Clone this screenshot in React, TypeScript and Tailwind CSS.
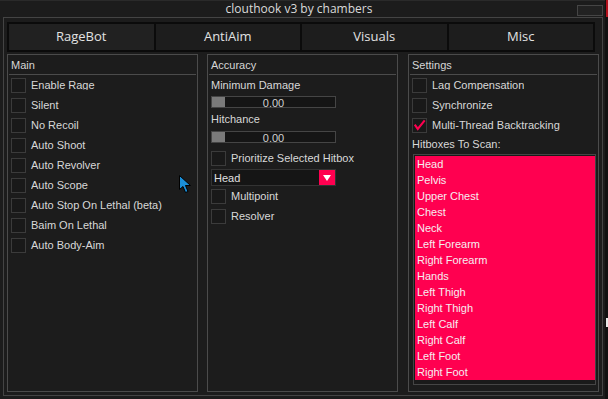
import { ReactNode } from "react";

const mainItems = [
  { label: "Enable Rage", clip: true },
  { label: "Silent" },
  { label: "No Recoil" },
  { label: "Auto Shoot" },
  { label: "Auto Revolver" },
  { label: "Auto Scope", clip: true },
  { label: "Auto Stop On Lethal (beta)" },
  { label: "Baim On Lethal" },
  { label: "Auto Body-Aim" },
];

const hitboxes = [
  "Head",
  "Pelvis",
  "Upper Chest",
  "Chest",
  "Neck",
  "Left Forearm",
  "Right Forearm",
  "Hands",
  "Left Thigh",
  "Right Thigh",
  "Left Calf",
  "Right Calf",
  "Left Foot",
  "Right Foot",
];

const tabs = ["RageBot", "AntiAim", "Visuals", "Misc"];

const Checkbox = ({ label, checked, clip }: { label: string; checked?: boolean; clip?: boolean }) => (
  <div className="flex h-[15px] items-start gap-[5px]">
    <div className="w-[15px] h-[15px] shrink-0 border border-[#3b3b3b] bg-[#191919] flex items-center justify-center">
      {checked && (
        <svg width="15" height="15" viewBox="0 0 15 15">
          <path d="M2 6.5 L5.5 11.5 L13.5 1.5" fill="none" stroke="#ff0050" strokeWidth="2.4" strokeLinejoin="miter" />
        </svg>
      )}
    </div>
    <div className={clip ? "h-[12px] overflow-hidden" : "h-[15px]"}>
      <span className="block leading-[15px] whitespace-nowrap">{label}</span>
    </div>
  </div>
);

const Slider = () => (
  <div className="grid w-[125px] h-[12px] border border-[#454545] bg-[#151515] overflow-hidden">
    <div className="col-start-1 row-start-1 w-[13px] h-full bg-[#7a7a7a]" />
    <div className="col-start-1 row-start-1 text-center leading-[12px] text-[#d0d0d0]">0.00</div>
  </div>
);

const GroupBox = ({ title, className, children }: { title: string; className: string; children: ReactNode }) => (
  <div className={`h-[338px] w-[191px] border border-[#4b4b4b] flex flex-col ${className}`}>
    <div className="h-[19px] pl-[3px] leading-[21px] text-[#d6d6d6]">{title}</div>
    <div className="h-px mx-px bg-[#4b4b4b]" />
    <div className="flex flex-col flex-1 pl-[3px] pt-[3px]">{children}</div>
  </div>
);

export default function App() {
  return (
    <div className="relative w-[608px] h-[399px] bg-[#111111] overflow-hidden font-['Liberation_Sans',Arial,sans-serif] text-[11px] text-[#d8d8d8]">
      <div className="w-[605px] h-[399px] bg-[#1c1c1c] flex flex-col">
        <div className="relative h-[17px] flex justify-center pr-[7px] border-t border-[#2a2a2a]">
          <span className="font-['Open_Sans',sans-serif] text-[12px] leading-[16px] text-[#dadada]">clouthook v3 by chambers</span>
          <div className="absolute right-[2px] top-[4px] w-[26px] h-[11px] border border-[#454545] bg-[#222222]" />
        </div>

        <div className="ml-[3px] w-[600px] h-[379px] border border-[#444444] flex flex-col">
          <div className="ml-[3px] mt-[4px] w-[588px] h-[30px] grid grid-cols-4 gap-[2px] p-[2px] bg-[#0b0b0b]">
            {tabs.map((t, i) => (
              <div
                key={t}
                className={`flex items-center justify-center font-['Open_Sans',sans-serif] text-[13px] text-[#e2e2e2] ${
                  i === 0 ? "bg-[#212121]" : "bg-[#1d1d1d]"
                }`}
              >
                {t}
              </div>
            ))}
          </div>

          <div className="flex mt-[2px]">
            <GroupBox title="Main" className="ml-[3px]">
              <div className="flex flex-col gap-[5px]">
                {mainItems.map((m) => (
                  <Checkbox key={m.label} label={m.label} clip={m.clip} />
                ))}
              </div>
            </GroupBox>

            <GroupBox title="Accuracy" className="ml-[9px]">
              <div className="h-[15px] leading-[15px]">Minimum Damage</div>
              <div className="mt-[3px]">
                <Slider />
              </div>
              <div className="mt-[4px] h-[15px] leading-[15px]">Hitchance</div>
              <div className="mt-[4px]">
                <Slider />
              </div>
              <div className="mt-[8px]">
                <Checkbox label="Prioritize Selected Hitbox" />
              </div>
              <div className="mt-[3px] flex w-[125px] h-[17px] border border-[#333333] bg-[#151515]">
                <span className="flex-1 pl-[2px] leading-[16px] text-[#e0e0e0]">Head</span>
                <div className="w-[16px] h-full bg-[#ff0050] flex items-center justify-center">
                  <svg width="10" height="8" viewBox="0 0 10 8">
                    <path d="M1 1 H9 L5 7 Z" fill="#ffffff" />
                  </svg>
                </div>
              </div>
              <div className="mt-[3px] flex flex-col gap-[5px]">
                <Checkbox label="Multipoint" />
                <Checkbox label="Resolver" />
              </div>
            </GroupBox>

            <GroupBox title="Settings" className="ml-[10px]">
              <div className="flex flex-col gap-[5px]">
                <Checkbox label="Lag Compensation" clip />
                <Checkbox label="Synchronize" />
                <Checkbox label="Multi-Thread Backtracking" checked />
              </div>
              <div className="mt-[4px] h-[15px] leading-[15px]">Hitboxes To Scan:</div>
              <div className="mt-[2px] ml-px w-[183px] h-[231px] border border-[#454545] bg-[#1a1a1a] pl-px pt-px">
                {hitboxes.map((h) => (
                  <div key={h} className="h-[16px] bg-[#ff0050] pl-[2px] leading-[17px] text-[#f6eef0]">
                    {h}
                  </div>
                ))}
              </div>
            </GroupBox>
          </div>
        </div>
      </div>

      <div className="absolute right-0 top-0 w-[2px] h-[17px] bg-[#b3101c]" />
      <div className="absolute right-0 top-[318px] w-[2px] h-[9px] bg-[#e8e8e8]" />

      <svg className="absolute left-[179px] top-[175px]" width="13" height="19" viewBox="0 0 13 19">
        <path
          d="M0.5 0.5 L0.5 14.5 L4 11.5 L6.5 17.5 L9 16.5 L6.5 10.5 L11.5 10.5 Z"
          fill="#1b8fd8"
          stroke="#000000"
          strokeWidth="1"
          strokeLinejoin="round"
        />
      </svg>
    </div>
  );
}
